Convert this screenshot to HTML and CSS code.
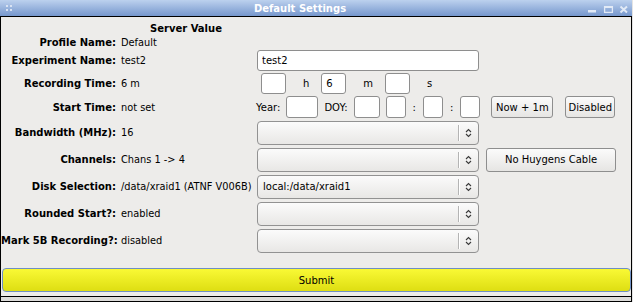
FILE: index.html
```html
<!DOCTYPE html>
<html>
<head>
  <title>Default Settings</title>
  <link rel="stylesheet" href="styles.css">
</head>
<body>
  <div class="window">
    <div class="title-bar">
      <span class="grip"><i></i><i></i><i></i><i></i></span>
      <span class="title">Default Settings</span>
      <svg class="window-buttons" width="46" height="16" viewBox="0 0 46 16">
        <rect x="2" y="10" width="8" height="2.5" fill="#e2eaf6"/>
        <rect x="18.6" y="6.6" width="7.8" height="5.8" fill="none" stroke="#e2eaf6" stroke-width="1.3"/>
        <rect x="18" y="6" width="9" height="2" fill="#e2eaf6"/>
        <path d="M34.5 6.5 L41 12.5 M41 6.5 L34.5 12.5" stroke="#e2eaf6" stroke-width="2"/>
      </svg>
    </div>

    <div class="content">
      <div class="settings-grid">
        <div class="heading">Server Value</div>

        <div class="label">Profile Name:</div>
        <div class="value">Default</div>

        <div class="label">Experiment Name:</div>
        <div class="value">test2</div>
        <input class="control field" type="text" value="test2">

        <div class="label">Recording Time:</div>
        <div class="value">6 m</div>
        <div class="control duration">
          <input class="field box" type="text" value="">
          <span class="unit">h</span>
          <input class="field box" type="text" value="6">
          <span class="unit">m</span>
          <input class="field box" type="text" value="">
          <span class="unit">s</span>
        </div>

        <div class="label">Start Time:</div>
        <div class="value">not set</div>
        <div class="control start-time">
          <span>Year:</span>
          <input class="field year" type="text" value="">
          <span>DOY:</span>
          <input class="field doy" type="text" value="">
          <input class="field clock" type="text" value="">
          <span class="colon">:</span>
          <input class="field clock" type="text" value="">
          <span class="colon">:</span>
          <input class="field clock" type="text" value="">
          <button class="button now">Now + 1m</button>
          <button class="button disabled-toggle">Disabled</button>
        </div>

        <div class="label">Bandwidth (MHz):</div>
        <div class="value">16</div>
        <div class="control combo">
          <span class="combo-text"></span>
          <span class="combo-arrow"><svg width="7" height="10" viewBox="0 0 7 10"><path d="M1 4 L3.5 1.5 L6 4 M1 6 L3.5 8.5 L6 6" fill="none" stroke="#3a3a3a" stroke-width="1.1"/></svg></span>
        </div>

        <div class="label">Channels:</div>
        <div class="value">Chans 1 -&gt; 4</div>
        <div class="control combo">
          <span class="combo-text"></span>
          <span class="combo-arrow"><svg width="7" height="10" viewBox="0 0 7 10"><path d="M1 4 L3.5 1.5 L6 4 M1 6 L3.5 8.5 L6 6" fill="none" stroke="#3a3a3a" stroke-width="1.1"/></svg></span>
        </div>
        <button class="button huygens">No Huygens Cable</button>

        <div class="label">Disk Selection:</div>
        <div class="value">/data/xraid1 (ATNF V006B)</div>
        <div class="control combo">
          <span class="combo-text">local:/data/xraid1</span>
          <span class="combo-arrow"><svg width="7" height="10" viewBox="0 0 7 10"><path d="M1 4 L3.5 1.5 L6 4 M1 6 L3.5 8.5 L6 6" fill="none" stroke="#3a3a3a" stroke-width="1.1"/></svg></span>
        </div>

        <div class="label">Rounded Start?:</div>
        <div class="value">enabled</div>
        <div class="control combo">
          <span class="combo-text"></span>
          <span class="combo-arrow"><svg width="7" height="10" viewBox="0 0 7 10"><path d="M1 4 L3.5 1.5 L6 4 M1 6 L3.5 8.5 L6 6" fill="none" stroke="#3a3a3a" stroke-width="1.1"/></svg></span>
        </div>

        <div class="label">Mark 5B Recording?:</div>
        <div class="value">disabled</div>
        <div class="control combo">
          <span class="combo-text"></span>
          <span class="combo-arrow"><svg width="7" height="10" viewBox="0 0 7 10"><path d="M1 4 L3.5 1.5 L6 4 M1 6 L3.5 8.5 L6 6" fill="none" stroke="#3a3a3a" stroke-width="1.1"/></svg></span>
        </div>
      </div>

      <button class="submit">Submit</button>
    </div>

    <div class="resize-bar"></div>
  </div>
</body>
</html>
```

FILE: styles.css
```css
html, body {
  margin: 0;
  padding: 0;
}

body {
  background: #e4e4e4;
  font-family: "DejaVu Sans", sans-serif;
  font-size: 10px;
  color: #000;
}

.window {
  width: 632px;
  height: 302px;
  display: flex;
  flex-direction: column;
}

/* title bar */

.title-bar {
  height: 16px;
  border-bottom: 1px solid #000;
  background: linear-gradient(#bcd1ee, #7697cd);
  display: flex;
  align-items: center;
}

.grip {
  width: 8px;
  padding-left: 6px;
  display: grid;
  grid-template-columns: 2px 2px;
  gap: 2px;
}

.grip i {
  width: 2px;
  height: 2px;
  background: #d9e3f3;
}

.title {
  flex: 1;
  text-align: center;
  color: #fff;
  font-weight: bold;
}

.window-buttons {
  display: block;
}

/* content */

.content {
  flex: 1;
  background: #edecea;
  border: 1px solid #000;
  border-top: none;
  padding-top: 4px;
  display: flex;
  flex-direction: column;
}

.settings-grid {
  display: grid;
  grid-template-columns: 115px 141px 222px 1fr;
  grid-template-rows: 14px 14px 22px 24px 24px repeat(5, 27px);
  align-items: center;
}

.heading {
  grid-column: 2;
  padding: 0 6px 0 5px;
  text-align: center;
  font-weight: bold;
}

.label {
  grid-column: 1;
  text-align: right;
  font-weight: bold;
  white-space: nowrap;
}

.value {
  grid-column: 2;
  padding-left: 5px;
  white-space: nowrap;
  font-size: 9.8px;
}

.control {
  grid-column: 3;
}

.field {
  box-sizing: border-box;
  height: 21px;
  margin: 0;
  padding: 0 4px;
  border: 1px solid #8e8e8e;
  border-radius: 3px;
  background: #fff;
  font: inherit;
  color: #000;
  outline: none;
}

.duration {
  display: flex;
  align-items: center;
  padding-left: 4px;
}

.box {
  width: 25px;
}

.unit {
  margin: 0 12px 0 17px;
}

.start-time {
  grid-column: 3 / 5;
  display: flex;
  align-items: center;
  gap: 6px;
  margin-left: -1px;
}

.start-time .field {
  height: 22px;
}

.year {
  width: 32px;
}

.doy {
  width: 26px;
}

.clock {
  width: 20px;
}

.colon {
  margin: 0 1px;
}

.button {
  box-sizing: border-box;
  height: 22px;
  margin: 0;
  padding: 0;
  border: 1px solid #8e8e8e;
  border-radius: 3px;
  background: linear-gradient(#fbfbfb, #e6e5e3);
  font: inherit;
  color: #000;
  white-space: nowrap;
}

.now {
  width: 62px;
  margin-left: 5px;
}

.disabled-toggle {
  width: 50px;
  margin-left: 6px;
}

.huygens {
  grid-column: 4;
  justify-self: start;
  width: 130px;
  height: 24px;
  margin-left: 7px;
}

.combo {
  box-sizing: border-box;
  height: 24px;
  display: flex;
  align-items: center;
  border: 1px solid #929292;
  border-radius: 4px;
  background: linear-gradient(#fbfbfb, #e8e7e5);
}

.combo-text {
  flex: 1;
  padding-left: 5px;
}

.combo-arrow {
  width: 19px;
  height: 16px;
  display: flex;
  align-items: center;
  justify-content: center;
  border-left: 1px solid #b4b4b4;
  box-shadow: inset 1px 0 #fff;
}

.combo-arrow svg {
  display: block;
}

.submit {
  box-sizing: border-box;
  height: 24px;
  margin: 14px 0 0 1px;
  border: 1px solid #6f8fc4;
  border-radius: 4px;
  background: linear-gradient(#f9f935, #dede12);
  font: inherit;
  color: #000;
}

.resize-bar {
  height: 4px;
  background: #dcdbd9;
  border: 1px solid #000;
  border-top: none;
}
```
